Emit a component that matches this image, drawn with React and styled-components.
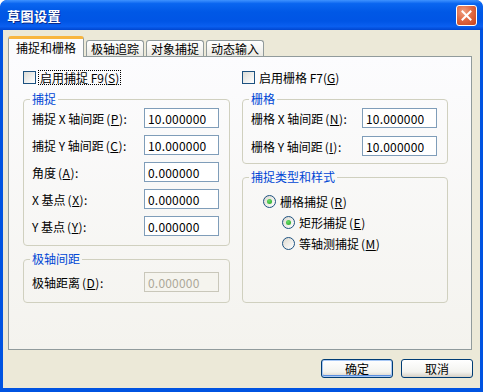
import styled, { createGlobalStyle, css } from "styled-components";

const GlobalStyle = createGlobalStyle`
  html, body {
    margin: 0;
    padding: 0;
    background: #ffffff;
  }
  * {
    box-sizing: border-box;
  }
`;

const font = `"Noto Sans CJK SC", "Noto Sans", sans-serif`;

const Window = styled.div`
  width: 483px;
  height: 392px;
  display: flex;
  flex-direction: column;
  background: #0053e1;
  border-radius: 7px 7px 0 0;
  padding: 0 3px 4px 3px;
  font-family: ${font};
  font-size: 12px;
  color: #000;
  overflow: hidden;
`;

const TitleBar = styled.div`
  height: 30px;
  margin: 0 -3px;
  padding: 0 6px 0 7px;
  display: flex;
  align-items: center;
  justify-content: space-between;
  border-radius: 7px 7px 0 0;
  background: linear-gradient(
    #3f93ff 0%,
    #0a66f0 12%,
    #0058e6 40%,
    #0055e5 70%,
    #0a5ff0 88%,
    #0046d0 100%
  );
`;

const Title = styled.span`
  color: #fff;
  font-weight: bold;
  font-size: 13px;
  letter-spacing: 0.5px;
  text-shadow: 1px 1px 0 #0a2a8a;
`;

const CloseButton = styled.div`
  width: 21px;
  height: 21px;
  border: 1px solid #fff;
  border-radius: 3px;
  background: radial-gradient(circle at 35% 30%, #f0a080 0%, #e06a45 45%, #c8401a 100%);
  display: flex;
  align-items: center;
  justify-content: center;
`;

const Body = styled.div`
  flex: 1;
  background: #ece9d8;
  padding: 6px 7px 0 5px;
  display: flex;
  flex-direction: column;
`;

const TabRow = styled.div`
  display: flex;
  align-items: flex-end;
  height: 20px;
  gap: 2px;
  position: relative;
  z-index: 1;
  margin-right: 1px;
`;

const Tab = styled.div`
  height: ${({ $active }) => ($active ? "21px" : "16px")};
  padding: 0 ${({ $active }) => ($active ? "7px" : "4px")};
  border: 1px solid #919b9c;
  border-bottom: none;
  border-radius: 3px 3px 0 0;
  display: flex;
  align-items: center;
  line-height: 14px;
  background: linear-gradient(#ffffff, #f3f3ef 60%, #ebeae3);
  ${({ $active }) =>
    $active &&
    css`
      border-top: 3px solid #f8b640;
      background: #fcfcfe;
      margin-bottom: -1px;
      padding-bottom: 1px;
    `}
`;

const Panel = styled.div`
  height: 294px;
  margin-right: 1px;
  border: 1px solid #919b9c;
  background: linear-gradient(#fcfcfe, #f4f3ee);
  display: grid;
  grid-template-columns: 207px 206px;
  column-gap: 12px;
  align-content: start;
  padding: 13px 0 0 14px;
`;

const Column = styled.div`
  display: flex;
  flex-direction: column;
`;

const CheckRow = styled.label`
  display: flex;
  align-items: center;
  height: 14px;
  gap: 2px;
  margin-bottom: 8px;
`;

const Box = styled.span`
  width: 13px;
  height: 13px;
  border: 1px solid #1c5180;
  background: linear-gradient(135deg, #dcdcd7, #ffffff);
`;

const CheckText = styled.span`
  padding: 0 1px;
  line-height: 13px;
  border: 1px dotted ${({ $focus }) => ($focus ? "#000" : "transparent")};
`;

const Group = styled.fieldset`
  margin: 0 0 ${({ $gap }) => $gap || 0}px 0;
  min-width: 0;
  border: 1px solid #d0d0bf;
  border-radius: 4px;
  padding: ${({ $top }) => $top}px 10px ${({ $bottom }) => $bottom}px 8px;
  height: ${({ $h }) => $h}px;
  display: flex;
  flex-direction: column;
  gap: ${({ $rowGap }) => $rowGap}px;
`;

const Legend = styled.legend`
  color: #0046d5;
  padding: 0 2px;
  margin-left: -2px;
  line-height: 14px;
`;

const FieldRow = styled.div`
  display: flex;
  align-items: center;
  justify-content: space-between;
  height: 20px;
`;

const Input = styled.div`
  width: 75px;
  height: 20px;
  border: 1px solid ${({ $disabled }) => ($disabled ? "#c9c7ba" : "#7f9db9")};
  background: ${({ $disabled }) => ($disabled ? "#f5f4ee" : "#ffffff")};
  color: ${({ $disabled }) => ($disabled ? "#aca899" : "#000")};
  padding: 0 3px;
  display: flex;
  align-items: center;
  letter-spacing: 0.2px;
`;

const KeyHint = styled.span`
  margin-left: 2px;
  letter-spacing: 0.5px;
`;

const RadioRow = styled.label`
  display: flex;
  align-items: center;
  gap: 4px;
  height: 14px;
  padding-left: ${({ $indent }) => $indent}px;
`;

const RadioCircle = styled.span`
  width: 13px;
  height: 13px;
  border-radius: 50%;
  border: 1px solid #1c5180;
  background: linear-gradient(135deg, #dcd9cf, #ffffff);
  display: flex;
  align-items: center;
  justify-content: center;
  &::after {
    content: "";
    width: 5px;
    height: 5px;
    border-radius: 50%;
    background: radial-gradient(circle at 40% 35%, #6ade6a, #21a121);
    display: ${({ $checked }) => ($checked ? "block" : "none")};
  }
`;

const Footer = styled.div`
  display: flex;
  justify-content: flex-end;
  gap: 8px;
  padding-top: 9px;
`;

const Button = styled.div`
  width: 72px;
  height: 19px;
  border: 1px solid #003c74;
  border-radius: 3px;
  display: flex;
  align-items: center;
  justify-content: center;
  background: linear-gradient(#ffffff, #f3f3ef 70%, #d6d0c5);
  ${({ $default }) =>
    $default &&
    css`
      box-shadow: inset 0 0 0 1px #a8c8f5, inset 0 -1px 0 1px #5b8fe0;
    `}
`;

const Key = ({ k, spaced }) => {
  const hint = (
    <>
      (<u>{k}</u>)
    </>
  );
  return spaced ? <KeyHint>{hint}</KeyHint> : hint;
};

const Field = ({ label, k, value, disabled }) => (
  <FieldRow>
    <span>
      {label}
      <Key k={k} spaced />:
    </span>
    <Input $disabled={disabled}>{value}</Input>
  </FieldRow>
);

const Radio = ({ checked, indent, label, k }) => (
  <RadioRow $indent={indent}>
    <RadioCircle $checked={checked} />
    <span>
      {label}
      <Key k={k} spaced />
    </span>
  </RadioRow>
);

export default function App() {
  return (
    <>
      <GlobalStyle />
      <Window>
        <TitleBar>
          <Title>草图设置</Title>
          <CloseButton>
            <svg width="11" height="11" viewBox="0 0 11 11">
              <path d="M1.5 1.5 L9.5 9.5 M9.5 1.5 L1.5 9.5" stroke="#fff" strokeWidth="2" strokeLinecap="square" />
            </svg>
          </CloseButton>
        </TitleBar>
        <Body>
          <TabRow>
            <Tab $active>捕捉和栅格</Tab>
            <Tab>极轴追踪</Tab>
            <Tab>对象捕捉</Tab>
            <Tab>动态输入</Tab>
          </TabRow>
          <Panel>
            <Column>
              <CheckRow>
                <Box />
                <CheckText $focus>
                  启用捕捉 F9<Key k="S" />
                </CheckText>
              </CheckRow>
              <Group $top={2} $bottom={9} $rowGap={7} $gap={6}>
                <Legend>捕捉</Legend>
                <Field label="捕捉 X 轴间距" k="P" value="10.000000" />
                <Field label="捕捉 Y 轴间距" k="C" value="10.000000" />
                <Field label="角度" k="A" value="0.000000" />
                <Field label="X 基点" k="X" value="0.000000" />
                <Field label="Y 基点" k="Y" value="0.000000" />
              </Group>
              <Group $top={6} $bottom={10} $rowGap={0}>
                <Legend>极轴间距</Legend>
                <Field label="极轴距离" k="D" value="0.000000" disabled />
              </Group>
            </Column>
            <Column>
              <CheckRow>
                <Box />
                <CheckText>
                  启用栅格 F7<Key k="G" />
                </CheckText>
              </CheckRow>
              <Group $top={2} $bottom={7} $rowGap={8} $gap={6}>
                <Legend>栅格</Legend>
                <Field label="栅格 X 轴间距" k="N" value="10.000000" />
                <Field label="栅格 Y 轴间距" k="I" value="10.000000" />
              </Group>
              <Group $top={10} $bottom={0} $rowGap={7} $h={133}>
                <Legend>捕捉类型和样式</Legend>
                <Radio checked indent={12} label="栅格捕捉" k="R" />
                <Radio checked indent={31} label="矩形捕捉" k="E" />
                <Radio indent={31} label="等轴测捕捉" k="M" />
              </Group>
            </Column>
          </Panel>
          <Footer>
            <Button $default>确定</Button>
            <Button>取消</Button>
          </Footer>
        </Body>
      </Window>
    </>
  );
}
